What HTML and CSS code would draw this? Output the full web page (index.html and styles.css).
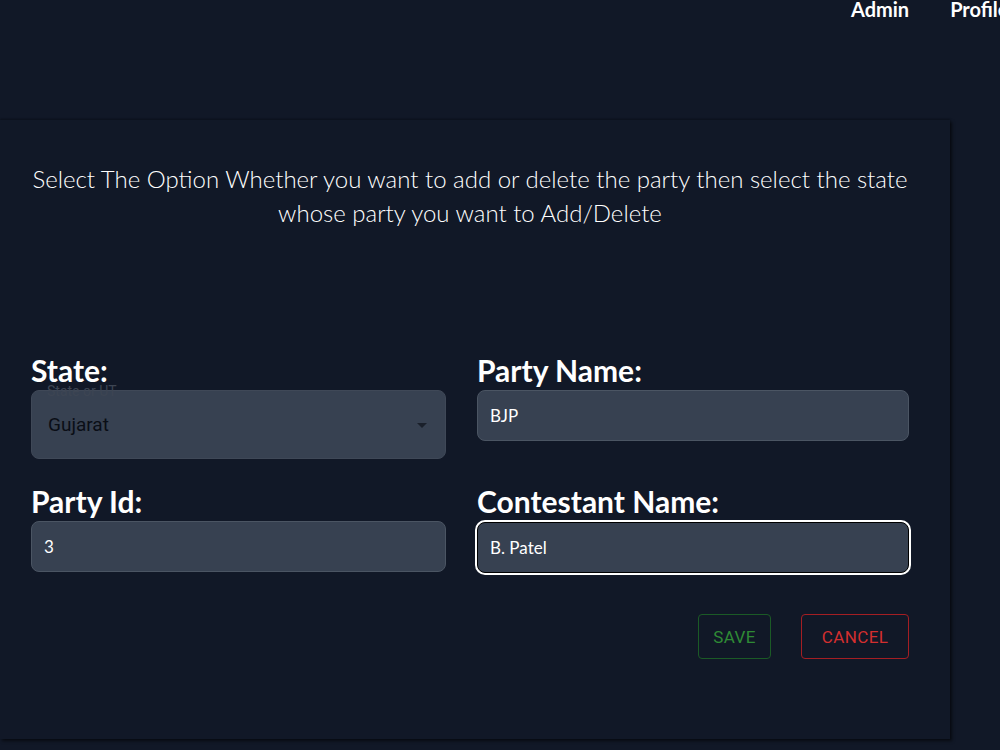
FILE: index.html
```html
<!DOCTYPE html>
<html>
<head>
<meta charset="utf-8">
<link rel="stylesheet" href="styles.css">
</head>
<body>
<nav class="nav">
  <a class="nav-link">Admin</a>
  <a class="nav-link">Profile</a>
</nav>
<main class="card">
  <p class="intro">Select The Option Whether you want to add or delete the party then select the state<br>whose party you want to Add/Delete</p>
  <form class="form">
    <div class="grid">
      <div class="field">
        <label class="label">State:</label>
        <div class="select">
          <span class="select-label">State or UT</span>
          <span class="select-value">Gujarat</span>
          <svg class="arrow" width="24" height="24" viewBox="0 0 24 24"><path d="M7 10l5 5 5-5z" fill="#1a202b"/></svg>
        </div>
      </div>
      <div class="field">
        <label class="label">Party Name:</label>
        <input class="input" type="text" value="BJP">
      </div>
      <div class="field">
        <label class="label">Party Id:</label>
        <input class="input" type="text" value="3">
      </div>
      <div class="field">
        <label class="label">Contestant Name:</label>
        <input class="input focused" type="text" value="B. Patel">
      </div>
    </div>
    <div class="actions">
      <button type="button" class="btn btn-save">Save</button>
      <button type="button" class="btn btn-cancel">Cancel</button>
    </div>
  </form>
</main>
</body>
</html>
```
FILE: styles.css
```css
html, body {
  margin: 0;
  padding: 0;
  background: #111827;
  overflow: hidden;
  height: 750px;
}
body {
  font-family: "Segoe UI", Lato, "Open Sans", sans-serif;
  color: #ffffff;
}
.nav {
  display: flex;
  gap: 41px;
  padding-left: 851px;
  height: 20px;
  align-items: flex-start;
  white-space: nowrap;
}
.nav-link {
  font-family: Lato, sans-serif;
  font-weight: 700;
  font-size: 20px;
  line-height: 20px;
  margin-top: -1px;
  color: #ffffff;
}
.card {
  margin-top: 100px;
  width: 950px;
  height: 619px;
  box-sizing: border-box;
  padding: 42px 41px 0 31px;
  background: #111827;
  box-shadow: 2px 2px 3px rgba(0, 0, 0, 0.55), 0 -1px 2px rgba(0, 0, 0, 0.3);
}
.intro {
  margin: 0;
  text-align: center;
  font-family: Lato, sans-serif;
  font-weight: 300;
  font-size: 24px;
  line-height: 34px;
  color: #ffffff;
}
.form {
  margin-top: 128px;
}
.grid {
  display: grid;
  grid-template-columns: 415px 432px;
  column-gap: 31px;
  row-gap: 30px;
}
.field {
  display: flex;
  flex-direction: column;
}
.label {
  font-family: Lato, sans-serif;
  font-weight: 700;
  font-size: 30px;
  line-height: 32px;
  margin-top: -4px;
  margin-bottom: 4px;
  color: #ffffff;
}
.select {
  position: relative;
  height: 69px;
  background: #374151;
  border-radius: 8px;
  border: 1px solid #3f4857;
  box-sizing: border-box;
  display: flex;
  align-items: center;
  padding-left: 16px;
}
.select-label {
  position: absolute;
  left: 15px;
  top: -8px;
  font-family: Roboto, sans-serif;
  font-size: 14px;
  line-height: 16px;
  color: #3d4553;
}
.select-value {
  font-family: Roboto, sans-serif;
  font-size: 19px;
  color: #0a0e16;
}
.arrow {
  position: absolute;
  right: 11px;
  top: 22px;
}
.input {
  height: 51px;
  box-sizing: border-box;
  background: #374151;
  border: 1px solid #4b5563;
  border-radius: 8px;
  padding: 0 12px;
  font-family: "Segoe UI", Lato, sans-serif;
  font-size: 17px;
  color: #ffffff;
  outline: none;
}
.input.focused {
  border: 1px solid #000000;
  box-shadow: 0 0 0 2px #ffffff;
  margin-top: 1px;
}
.actions {
  display: flex;
  justify-content: flex-end;
  gap: 30px;
  margin-top: 41px;
}
.btn {
  height: 45px;
  padding: 0;
  background: transparent;
  border-radius: 4px;
  font-family: Roboto, sans-serif;
  font-size: 17px;
  letter-spacing: 0.4px;
  text-transform: uppercase;
  text-align: center;
  cursor: pointer;
}
.btn-save {
  width: 73px;
  border: 1px solid #1b5a26;
  color: #2f8a35;
}
.btn-cancel {
  width: 108px;
  border: 1px solid #a41e23;
  color: #d32f2f;
}
```
